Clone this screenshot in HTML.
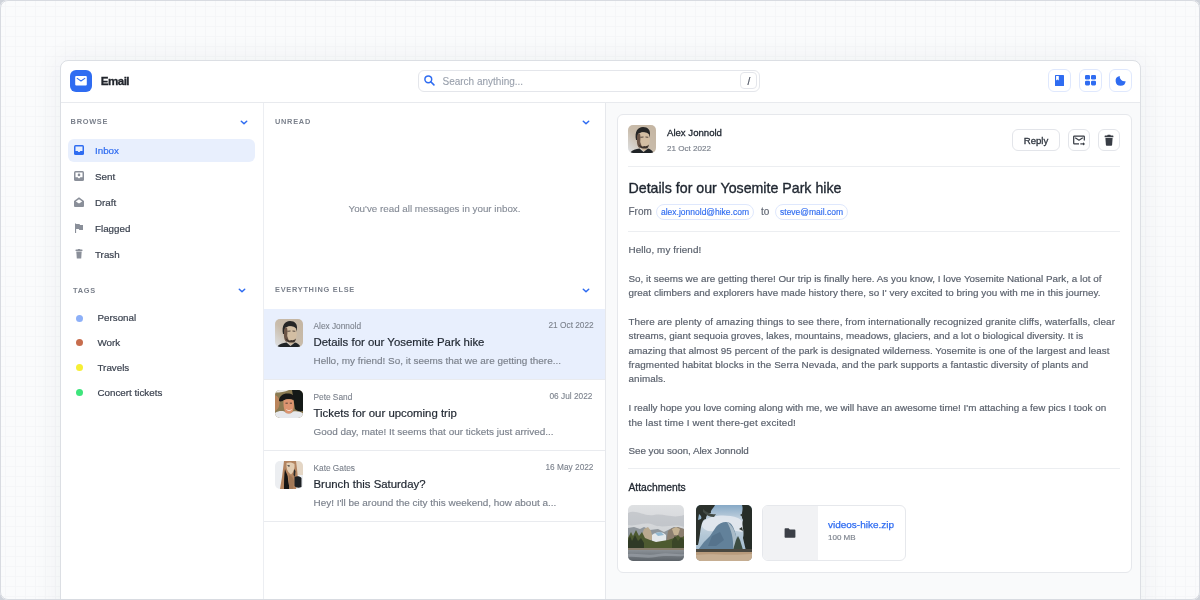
<!DOCTYPE html>
<html><head><meta charset="utf-8"><title>Email</title>
<style>
*{box-sizing:border-box;margin:0;padding:0}
html,body{width:1200px;height:600px;overflow:hidden;background:#cfd3da}
body{font-family:"Liberation Sans",sans-serif;position:relative}
.a{position:absolute}
.t{position:absolute;white-space:nowrap;line-height:1}
#bg{position:absolute;left:0;top:0;width:1200px;height:600px;border-radius:8px;
 background-color:#fafbfc;
 background-image:linear-gradient(#f5f6f8 1px,transparent 1px),linear-gradient(90deg,#f5f6f8 1px,transparent 1px);
 background-size:10px 10px;background-position:5px 6px}
#fb{position:absolute;left:0;top:0;width:1200px;height:600px;border:1px solid #d8dbe1;border-radius:8px}
#app{position:absolute;left:60px;top:60px;width:1081px;height:560px;background:#fff;border:1px solid #dcdfe4;border-radius:8px;box-shadow:0 0 28px 4px rgba(30,40,60,0.045)}
.hl{position:absolute;height:1px;background:#eceef2}
.vl{position:absolute;width:1px;background:#eceef2}
.sec{font-size:7.4px;font-weight:bold;color:#7b818c;letter-spacing:0.72px}
.chev{position:absolute;width:8px;height:5px}
.nav{font-size:9.8px;color:#3c4350;-webkit-text-stroke:0.2px currentColor}
.dot{position:absolute;width:7px;height:7px;border-radius:50%}
.item{position:absolute;left:264px;width:341px;height:71px;border-bottom:1px solid #e9ebef}
.av{position:absolute;width:28px;height:28px;border-radius:5px;overflow:hidden}
.ibtn{position:absolute;width:23px;height:23px;border:1px solid #dfe8fd;border-radius:6px;background:#fff}
.med{-webkit-text-stroke:0.3px currentColor}
.reg{-webkit-text-stroke:0.15px currentColor}
.btn{position:absolute;height:22px;border:1px solid #e3e5ea;border-radius:6px;background:#fff}
</style></head>
<body>
<div id="root" style="position:absolute;left:0;top:0;width:1200px;height:600px;will-change:transform">
<div id="bg"></div>
<div id="app"></div>
<!-- HEADER -->
<div class="a" style="left:70px;top:70px;width:22px;height:22px;border-radius:6px;background:#2f6cf1"></div>
<svg class="a" style="left:75px;top:76px" width="12" height="10" viewBox="0 0 12 10"><rect x="0.2" y="0" width="11.6" height="9.4" rx="1" fill="#fff"/><path d="M2.2 2.4 L6 5 L9.8 2.4" stroke="#2f6cf1" stroke-width="1.1" fill="none" stroke-linecap="round" stroke-linejoin="round"/></svg>
<div class="t" style="left:100.8px;top:74.9px;font-size:11.6px;font-weight:bold;color:#22262d;letter-spacing:-0.55px;-webkit-text-stroke:0.3px #22262d">Email</div>
<div class="hl" style="left:61px;top:102px;width:1079px;background:#e8eaee"></div>

<div class="a" style="left:418px;top:70px;width:342px;height:22px;border:1px solid #e4e6eb;border-radius:6px;background:#fff"></div>
<svg class="a" style="left:424px;top:75px" width="11" height="11" viewBox="0 0 11 11"><circle cx="4.3" cy="4.3" r="3.4" stroke="#2f6cf1" stroke-width="1.5" fill="none"/><path d="M6.8 6.8 L9.9 9.9" stroke="#2f6cf1" stroke-width="1.6" stroke-linecap="round"/></svg>
<div class="t" style="left:442.5px;top:77px;font-size:10px;color:#9aa1ad;-webkit-text-stroke:0.1px #9aa1ad">Search anything...</div>
<div class="a" style="left:740px;top:72px;width:17px;height:17px;border:1px solid #e4e6eb;border-radius:4px;background:#fff"></div>
<div class="t" style="left:747.6px;top:76.6px;font-size:10px;color:#4b5260;-webkit-text-stroke:0.2px #4b5260">/</div>

<div class="ibtn" style="left:1048px;top:69px"></div>
<svg class="a" style="left:1050px;top:70px" width="22" height="22" viewBox="0 0 22 22"><path d="M5.6 5 H13.4 A0.6 0.6 0 0 1 14 5.6 V15.4 A0.6 0.6 0 0 1 13.4 16 H5.6 A0.6 0.6 0 0 1 5 15.4 V5.6 A0.6 0.6 0 0 1 5.6 5 Z" fill="#2f6cf1"/><path d="M6.1 6 H8.8 V10.6 L7.45 9.6 L6.1 10.6 Z" fill="#fff"/></svg>
<div class="ibtn" style="left:1079px;top:69px"></div>
<svg class="a" style="left:1085px;top:75px" width="12" height="11" viewBox="0 0 12 11"><rect x="0" y="0" width="5" height="4.6" rx="1.3" fill="#2f6cf1"/><rect x="6" y="0" width="5" height="4.6" rx="1.3" fill="#2f6cf1"/><rect x="0" y="5.8" width="5" height="4.6" rx="1.3" fill="#2f6cf1"/><rect x="6" y="5.8" width="5" height="4.6" rx="1.3" fill="#2f6cf1"/></svg>
<div class="ibtn" style="left:1109px;top:69px"></div>
<svg class="a" style="left:1110px;top:70px" width="22" height="22" viewBox="0 0 22 22"><path d="M9.7 5.9 A5 5 0 1 0 15.6 11.2 A4.8 4.8 0 0 1 9.7 5.9 Z" fill="#2f6cf1"/></svg>

<!-- COLUMN BORDERS -->
<div class="vl" style="left:263px;top:103px;height:497px"></div>
<div class="vl" style="left:605px;top:103px;height:497px;background:#e6e8ec"></div>
<div class="a" style="left:606px;top:103px;width:534px;height:497px;background:#f9fafb"></div>

<!-- SIDEBAR -->
<div class="t sec" style="left:70.6px;top:118.3px">BROWSE</div>
<svg class="chev" style="left:240px;top:119.5px" viewBox="0 0 8 5"><path d="M1.3 1.2 L4 3.8 L6.7 1.2" stroke="#2f6cf1" stroke-width="1.5" fill="none" stroke-linecap="round" stroke-linejoin="round"/></svg>
<div class="a" style="left:68px;top:139px;width:187px;height:23px;border-radius:6px;background:#e8effd"></div>
<svg class="a" style="left:74px;top:145px" width="10" height="10" viewBox="0 0 10 10"><rect x="0" y="0" width="10" height="10" rx="1.5" fill="#2f6cf1"/><path d="M1.5 1.5 H8.5 V6 H6.3 L5.6 7 H4.4 L3.7 6 H1.5 Z" fill="#e8effd"/></svg>
<div class="t nav" style="left:95px;top:145.5px;color:#2f6cf1">Inbox</div>
<svg class="a" style="left:74px;top:171px" width="10" height="10" viewBox="0 0 10 10"><rect x="0" y="0" width="10" height="10" rx="1.5" fill="#8a8f99"/><path d="M1.5 1.5 H8.5 V6.3 H6.3 L5.6 7.2 H4.4 L3.7 6.3 H1.5 Z" fill="#fff"/><circle cx="5" cy="3.9" r="1.3" fill="#8a8f99"/></svg>
<div class="t nav" style="left:95px;top:171.5px">Sent</div>
<svg class="a" style="left:74px;top:197px" width="10" height="10" viewBox="0 0 10 10"><path d="M0 4 L5 0.3 L10 4 V9 A1 1 0 0 1 9 10 H1 A1 1 0 0 1 0 9 Z" fill="#8a8f99"/><path d="M1.8 4.6 L5 2.3 L8.2 4.6 L5 6.6 Z" fill="#fff"/></svg>
<div class="t nav" style="left:95px;top:197.5px">Draft</div>
<svg class="a" style="left:74px;top:223px" width="10" height="10" viewBox="0 0 10 10"><rect x="1" y="0.5" width="1.1" height="9.5" fill="#8a8f99"/><path d="M2 1 H5.5 L6 2 H9 V7 H5.3 L4.8 6 H2 Z" fill="#8a8f99"/></svg>
<div class="t nav" style="left:95px;top:223.5px">Flagged</div>
<svg class="a" style="left:74px;top:249px" width="10" height="10" viewBox="0 0 10 10"><rect x="1.5" y="0.6" width="7" height="1.4" rx="0.5" fill="#8a8f99"/><rect x="3.8" y="0" width="2.4" height="1" fill="#8a8f99"/><path d="M2.3 2.6 H7.7 L7.2 9.6 H2.8 Z" fill="#8a8f99"/></svg>
<div class="t nav" style="left:95px;top:249.5px">Trash</div>

<div class="t sec" style="left:73px;top:286.6px">TAGS</div>
<svg class="chev" style="left:237.5px;top:288px" viewBox="0 0 8 5"><path d="M1.3 1.2 L4 3.8 L6.7 1.2" stroke="#2f6cf1" stroke-width="1.5" fill="none" stroke-linecap="round" stroke-linejoin="round"/></svg>
<div class="dot" style="left:75.5px;top:314.5px;background:#8db0f8"></div>
<div class="t nav" style="left:97.5px;top:313px">Personal</div>
<div class="dot" style="left:75.5px;top:339px;background:#c76d4d"></div>
<div class="t nav" style="left:97.5px;top:338px">Work</div>
<div class="dot" style="left:75.5px;top:364px;background:#f6ef35"></div>
<div class="t nav" style="left:97.5px;top:363px">Travels</div>
<div class="dot" style="left:75.5px;top:389px;background:#3ee57c"></div>
<div class="t nav" style="left:97.5px;top:388px">Concert tickets</div>

<!-- MIDDLE -->
<div class="t sec" style="left:275px;top:118.3px">UNREAD</div>
<svg class="chev" style="left:581.5px;top:119.5px" viewBox="0 0 8 5"><path d="M1.3 1.2 L4 3.8 L6.7 1.2" stroke="#2f6cf1" stroke-width="1.5" fill="none" stroke-linecap="round" stroke-linejoin="round"/></svg>
<div class="t" style="left:264px;width:341px;text-align:center;top:204px;font-size:9.8px;color:#858b96;-webkit-text-stroke:0.12px #858b96">You've read all messages in your inbox.</div>
<div class="t sec" style="left:275px;top:285.8px">EVERYTHING ELSE</div>
<svg class="chev" style="left:581.5px;top:287.5px" viewBox="0 0 8 5"><path d="M1.3 1.2 L4 3.8 L6.7 1.2" stroke="#2f6cf1" stroke-width="1.5" fill="none" stroke-linecap="round" stroke-linejoin="round"/></svg>

<div class="item" style="top:309px;background:#e8effd;border-top:0"></div>
<div class="item" style="top:380px"></div>
<div class="item" style="top:451px"></div>

<div class="av" style="left:275px;top:319px" id="av1"><svg width="28" height="28" viewBox="0 0 28 28"><defs><linearGradient id="abg1" x1="1" y1="0" x2="0" y2="1"><stop offset="0" stop-color="#c4b5a2"/><stop offset="0.55" stop-color="#c9bcab"/><stop offset="1" stop-color="#dfe2e6"/></linearGradient></defs><rect width="28" height="28" fill="url(#abg1)"/>
<path d="M8 15 C6.5 7 9.5 2 15 2 C20 2 22.5 5 22 10 L21.2 13 C20.5 9 18.5 7.5 15 7.5 C12 7.5 10.5 9 10 15 Z" fill="#262626"/>
<path d="M10 9 C13 6.5 19 6.5 21 9.5 C22.2 13 22 18.5 20.3 21.5 C18.5 24 14.5 24.5 12.5 22.5 C10.5 20.5 9.5 14 10 9 Z" fill="#d3bea3"/>
<path d="M9 12 C9 9.5 10 8.5 12 8.5 L12.5 12 L12.2 17 L14 22 C12 23.5 10.5 23 9.6 20.5 C8.8 18 8.8 15 9 12 Z" fill="#6a5446"/>
<path d="M12.5 12.3 L15.5 12 M17.5 12 L20.3 12.3" stroke="#4a3d35" stroke-width="0.9"/>
<path d="M10 18.5 C11.5 22.5 14.5 24.3 16.5 24.3 C19 24.3 20.5 22.5 21 19.5 C19.5 21 18 21.5 16.5 21 C15 21.8 13.5 21.5 12.5 20.5 C11.5 20 10.8 19.5 10 18.5 Z" fill="#3d332d"/>
<path d="M13 23.5 L16 26 L19.5 23.5 Z" fill="#cbb59a"/>
<path d="M2 28 C4 25 8 23.8 11.5 23.5 L15.5 27 L20 23.5 C22 24 24.5 25.5 25.5 28 Z" fill="#1f2326"/>
</svg></div>
<div class="t" style="left:313.5px;top:322px;font-size:8.3px;color:#7b818c;-webkit-text-stroke:0.1px #7b818c">Alex Jonnold</div>
<div class="t" style="left:548.5px;top:321.2px;font-size:8.3px;color:#7b818c;-webkit-text-stroke:0.1px #7b818c">21 Oct 2022</div>
<div class="t" style="left:313.5px;top:337.2px;font-size:11.4px;color:#1f2630;-webkit-text-stroke:0.2px #1f2630">Details for our Yosemite Park hike</div>
<div class="t" style="left:313.5px;top:356px;font-size:9.95px;color:#7b818c;-webkit-text-stroke:0.15px #7b818c">Hello, my friend! So, it seems that we are getting there...</div>

<div class="av" style="left:275px;top:390px" id="av2"><svg width="28" height="28" viewBox="0 0 28 28"><rect width="28" height="28" fill="#8a7a52"/><path d="M0 0 H14 C10 2 5 2.5 0 2.5 Z" fill="#ecebe8"/><path d="M0 5 C3 6 5 9 4.5 14 C4 18 2 20 0 21 Z" fill="#c98a60" opacity="0.75"/><path d="M17 0 H28 V21 C25 22 22 21 20 19 Z" fill="#141917"/>
<path d="M4 11 C4 6 8 3.5 12.5 3.5 C17 3.5 19.5 5.5 19.5 9 L18.5 10 C16 8.5 12 8.5 9.5 10 C7.5 11 6 12 4 11 Z" fill="#171717"/>
<path d="M8.5 10.5 C11 8.8 16 8.8 18.5 10.5 C19.3 14 19 19 17.3 22 C15.5 24.5 11.5 24.5 10.2 22 C8.8 19 8.2 14.5 8.5 10.5 Z" fill="#dc9470"/>
<path d="M10.5 13.2 H12.8 M14.8 13.2 H17" stroke="#4a3a30" stroke-width="0.9"/>
<path d="M11.5 19.5 C13 21 15 21 16.5 19.5" stroke="#f4e6dc" stroke-width="0.9" fill="none"/>
<path d="M0 23 C3 21 6.5 20.5 9.5 21.5 C12 24.5 15.5 24.5 18 21.5 C22 20.8 25.5 21.5 28 23.5 V28 H0 Z" fill="#e6e8ec"/>
</svg></div>
<div class="t" style="left:313.5px;top:393px;font-size:8.3px;color:#7b818c;-webkit-text-stroke:0.1px #7b818c">Pete Sand</div>
<div class="t" style="left:549.5px;top:392.2px;font-size:8.3px;color:#7b818c;-webkit-text-stroke:0.1px #7b818c">06 Jul 2022</div>
<div class="t" style="left:313.5px;top:408.2px;font-size:11.4px;color:#1f2630;-webkit-text-stroke:0.2px #1f2630">Tickets for our upcoming trip</div>
<div class="t" style="left:313.5px;top:427px;font-size:9.95px;color:#7b818c;-webkit-text-stroke:0.15px #7b818c">Good day, mate! It seems that our tickets just arrived...</div>

<div class="av" style="left:275px;top:461px" id="av3"><svg width="28" height="28" viewBox="0 0 28 28"><rect width="28" height="28" fill="#eceef1"/><rect x="17" y="0" width="11" height="14" fill="#e4d6c5"/>
<path d="M9 0 H21 L22 8 L23 18 L21 28 H5 L7 16 Z" fill="#b38460"/>
<path d="M11.5 2 C14 1 18 1.5 19.5 3 C20 7 19 11 16 13.5 C14 12 12 10 11.5 6 Z" fill="#e2ccb2"/>
<path d="M12 4 L15 4.5 L14 6 Z" fill="#3b3b3b"/>
<path d="M10 8 C11 12 13 14 13 18 C13 22 15 26 14 28 H9 C9 22 9 14 10 8 Z" fill="#151515"/>
<path d="M19 8 L20.5 10 L20 16 L18.5 14 Z" fill="#2a2a2a"/>
<path d="M19.5 16 C22 14.5 25 15 26.5 17 V26 C24 27 21 27 19.5 25 Z" fill="#1d2024"/>
<path d="M14 14 C16 15 18 16 19 20 L18 28 H14 Z" fill="#9c7454" opacity="0.8"/>
</svg></div>
<div class="t" style="left:313.5px;top:464px;font-size:8.3px;color:#7b818c;-webkit-text-stroke:0.1px #7b818c">Kate Gates</div>
<div class="t" style="left:545.5px;top:463.2px;font-size:8.3px;color:#7b818c;-webkit-text-stroke:0.1px #7b818c">16 May 2022</div>
<div class="t" style="left:313.5px;top:479.2px;font-size:11.4px;color:#1f2630;-webkit-text-stroke:0.2px #1f2630">Brunch this Saturday?</div>
<div class="t" style="left:313.5px;top:498px;font-size:9.95px;color:#7b818c;-webkit-text-stroke:0.15px #7b818c">Hey! I'll be around the city this weekend, how about a...</div>

<!-- RIGHT CARD -->
<div class="a" style="left:617px;top:114px;width:515px;height:459px;border:1px solid #e6e8ec;border-radius:6px;background:#fff"></div>
<div class="av" style="left:628px;top:125px" id="av4"><svg width="28" height="28" viewBox="0 0 28 28"><defs><linearGradient id="abg4" x1="1" y1="0" x2="0" y2="1"><stop offset="0" stop-color="#c4b5a2"/><stop offset="0.55" stop-color="#c9bcab"/><stop offset="1" stop-color="#dfe2e6"/></linearGradient></defs><rect width="28" height="28" fill="url(#abg4)"/>
<path d="M8 15 C6.5 7 9.5 2 15 2 C20 2 22.5 5 22 10 L21.2 13 C20.5 9 18.5 7.5 15 7.5 C12 7.5 10.5 9 10 15 Z" fill="#262626"/>
<path d="M10 9 C13 6.5 19 6.5 21 9.5 C22.2 13 22 18.5 20.3 21.5 C18.5 24 14.5 24.5 12.5 22.5 C10.5 20.5 9.5 14 10 9 Z" fill="#d3bea3"/>
<path d="M9 12 C9 9.5 10 8.5 12 8.5 L12.5 12 L12.2 17 L14 22 C12 23.5 10.5 23 9.6 20.5 C8.8 18 8.8 15 9 12 Z" fill="#6a5446"/>
<path d="M12.5 12.3 L15.5 12 M17.5 12 L20.3 12.3" stroke="#4a3d35" stroke-width="0.9"/>
<path d="M10 18.5 C11.5 22.5 14.5 24.3 16.5 24.3 C19 24.3 20.5 22.5 21 19.5 C19.5 21 18 21.5 16.5 21 C15 21.8 13.5 21.5 12.5 20.5 C11.5 20 10.8 19.5 10 18.5 Z" fill="#3d332d"/>
<path d="M13 23.5 L16 26 L19.5 23.5 Z" fill="#cbb59a"/>
<path d="M2 28 C4 25 8 23.8 11.5 23.5 L15.5 27 L20 23.5 C22 24 24.5 25.5 25.5 28 Z" fill="#1f2326"/>
</svg></div>
<div class="t" style="left:667px;top:128.3px;font-size:9.6px;color:#1f2630;-webkit-text-stroke:0.3px #1f2630">Alex Jonnold</div>
<div class="t" style="left:667px;top:145px;font-size:8.1px;color:#7b818c;-webkit-text-stroke:0.15px #7b818c">21 Oct 2022</div>

<div class="btn" style="left:1012px;top:129px;width:48px"></div>
<div class="t" style="left:1012px;width:48px;text-align:center;top:135.8px;font-size:9.6px;color:#2c333d;-webkit-text-stroke:0.3px #2c333d">Reply</div>
<div class="btn" style="left:1068px;top:129px;width:22px"></div>
<svg class="a" style="left:1068px;top:129px" width="22" height="22" viewBox="0 0 22 22"><path d="M16.3 11.6 V7.8 A0.6 0.6 0 0 0 15.7 7.2 H6.3 A0.6 0.6 0 0 0 5.7 7.8 V14.2 A0.6 0.6 0 0 0 6.3 14.8 H11" stroke="#383d45" stroke-width="1.25" fill="none"/><path d="M7.2 8.8 L11 11.2 L14.8 8.8" stroke="#383d45" stroke-width="1.15" fill="none" stroke-linejoin="round"/><path d="M12.3 14.9 H15.6" stroke="#383d45" stroke-width="1.2"/><path d="M15 13.3 L17.1 14.9 L15 16.5 Z" fill="#383d45"/></svg>
<div class="btn" style="left:1098px;top:129px;width:22px"></div>
<svg class="a" style="left:1098px;top:129px" width="22" height="22" viewBox="0 0 22 22"><rect x="6.6" y="6.6" width="8.8" height="1.7" rx="0.5" fill="#383d45"/><rect x="9.3" y="5.8" width="3.4" height="1.2" rx="0.5" fill="#383d45"/><path d="M7.4 8.9 H14.6 L14.1 16.1 A0.8 0.8 0 0 1 13.3 16.8 H8.7 A0.8 0.8 0 0 1 7.9 16.1 Z" fill="#383d45"/></svg>

<div class="hl" style="left:628px;top:166px;width:492px;background:#eceef1"></div>
<div class="t" style="left:628.5px;top:180.9px;font-size:14.2px;color:#1f2630;-webkit-text-stroke:0.35px #1f2630">Details for our Yosemite Park hike</div>
<div class="t" style="left:628.5px;top:207.2px;font-size:10px;color:#5f6571;-webkit-text-stroke:0.15px #5f6571">From</div>
<div class="a" style="left:656px;top:204px;width:98px;height:16px;border:1px solid #dfe8fd;border-radius:8px"></div>
<div class="t" style="left:656px;width:98px;text-align:center;top:208.4px;font-size:8.5px;color:#2f6cf1;-webkit-text-stroke:0.15px #2f6cf1">alex.jonnold@hike.com</div>
<div class="t" style="left:761px;top:207.2px;font-size:10px;color:#5f6571;-webkit-text-stroke:0.15px #5f6571">to</div>
<div class="a" style="left:775px;top:204px;width:73px;height:16px;border:1px solid #dfe8fd;border-radius:8px"></div>
<div class="t" style="left:775px;width:73px;text-align:center;top:208.4px;font-size:8.5px;color:#2f6cf1;-webkit-text-stroke:0.15px #2f6cf1">steve@mail.com</div>
<div class="hl" style="left:628px;top:231px;width:492px;background:#eceef1"></div>

<div class="a" id="body" style="left:628.5px;top:242.9px;font-size:9.86px;line-height:14.4px;color:#535a66;white-space:nowrap;-webkit-text-stroke:0.2px #6a707b">
<div class="a" style="left:0;top:0.0px;letter-spacing:0.1px">Hello, my friend!</div>
<div class="a" style="left:0;top:28.8px;letter-spacing:0.016px">So, it seems we are getting there! Our trip is finally here. As you know, I love Yosemite National Park, a lot of</div>
<div class="a" style="left:0;top:43.2px;letter-spacing:0.043px">great climbers and explorers have made history there, so I' very excited to bring you with me in this journey.</div>
<div class="a" style="left:0;top:72.0px;letter-spacing:0.1035px">There are plenty of amazing things to see there, from internationally recognized granite cliffs, waterfalls, clear</div>
<div class="a" style="left:0;top:86.4px;letter-spacing:0.028px">streams, giant sequoia groves, lakes, mountains, meadows, glaciers, and a lot o biological diversity. It is</div>
<div class="a" style="left:0;top:100.8px;letter-spacing:0.072px">amazing that almost 95 percent of the park is designated wilderness. Yosemite is one of the largest and least</div>
<div class="a" style="left:0;top:115.2px;letter-spacing:0.102px">fragmented habitat blocks in the Serra Nevada, and the park supports a fantastic diversity of plants and</div>
<div class="a" style="left:0;top:129.6px;letter-spacing:0.1px">animals.</div>
<div class="a" style="left:0;top:158.4px;letter-spacing:0.003px">I really hope you love coming along with me, we will have an awesome time! I'm attaching a few pics I took on</div>
<div class="a" style="left:0;top:172.8px;letter-spacing:0.17px">the last time I went there-get excited!</div>
<div class="a" style="left:0;top:201.6px;letter-spacing:-0.05px">See you soon, Alex Jonnold</div>
</div>
<div class="hl" style="left:628px;top:468px;width:492px;background:#eceef1"></div>
<div class="t" style="left:628.5px;top:483.2px;font-size:10.3px;color:#1f2630;-webkit-text-stroke:0.3px #1f2630">Attachments</div>

<div class="a" style="left:628px;top:505px;width:56px;height:56px;border-radius:5px;overflow:hidden" id="img1"><svg width="56" height="56" viewBox="0 0 56 56"><defs><linearGradient id="sky1" x1="0" y1="0" x2="0" y2="1"><stop offset="0" stop-color="#dfe1e3"/><stop offset="0.5" stop-color="#d0d3d6"/><stop offset="1" stop-color="#bfc4c8"/></linearGradient><linearGradient id="riv1" x1="0" y1="0" x2="0" y2="1"><stop offset="0" stop-color="#8a9096"/><stop offset="1" stop-color="#5d6369"/></linearGradient></defs>
<rect width="56" height="56" fill="url(#sky1)"/>
<path d="M0 8 C8 4 16 12 26 10 C36 8 44 14 56 10 V22 C46 18 36 24 26 20 C16 16 8 22 0 20 Z" fill="#aeb2b7" opacity="0.45"/>
<path d="M0 23 L6 22 L12 24 L16 22 L22 25 L30 24 L36 27 L40 25 L46 22 L52 23 L56 24 V40 H0 Z" fill="#8f969c"/>
<path d="M16 24 L20 22 L23 26 L25 34 L18 38 L14 30 Z" fill="#b9a98f"/>
<path d="M40 26 L44 23 L50 22 L56 24 V38 L38 38 Z" fill="#8c7f70"/>
<path d="M44 24 L48 22 L52 24 L50 30 L46 30 Z" fill="#c4b293"/>
<path d="M24 30 C28 27 34 26 38 30 L38 37 L24 37 Z" fill="#e4e8eb"/>
<path d="M27 28 L33 27 L36 30 L30 31 Z" fill="#93b8d0"/>
<path d="M0 33 L3 27 L5 31 L8 25 L11 31 L14 27 L17 33 L22 35 L28 37 L34 36 L40 35 L46 33 L50 30 L53 33 L56 31 V45 H0 Z" fill="#4d5a30"/>
<path d="M0 36 L2 31 L4 36 L7 30 L10 36 L13 33 L16 38 V45 H0 Z" fill="#2f3a26"/>
<path d="M44 36 L47 31 L50 36 L53 32 L56 35 V44 H44 Z" fill="#3a4628"/>
<rect x="0" y="43" width="56" height="3" fill="#8a7f6e"/>
<rect x="0" y="45" width="56" height="11" fill="url(#riv1)"/>
<path d="M0 49 C10 48 20 51 30 49 C40 47 48 50 56 49 V51 C46 52 38 50 28 52 C18 54 8 51 0 52 Z" fill="#9aa0a6" opacity="0.7"/>
</svg></div>
<div class="a" style="left:695.5px;top:505px;width:56px;height:56px;border-radius:5px;overflow:hidden" id="img2"><svg width="56" height="56" viewBox="0 0 56 56"><defs><linearGradient id="sky2" x1="0" y1="0" x2="0" y2="1"><stop offset="0" stop-color="#86a9c6"/><stop offset="0.3" stop-color="#cdd9e3"/><stop offset="0.55" stop-color="#b3c7d6"/><stop offset="1" stop-color="#98b5ca"/></linearGradient></defs>
<rect width="56" height="56" fill="url(#sky2)"/>
<path d="M8 16 C16 10 30 9 42 13 C48 16 50 22 46 27 C36 24 24 27 12 26 C6 24 4 19 8 16 Z" fill="#e2e8ee" opacity="0.9"/>
<path d="M2 45 L8 37 L14 31 L20 22 C24 17 30 16 34 18 C39 22 41 33 42 45 Z" fill="#62819a"/>
<path d="M31 17 C37 20 40 28 41 37 L42 45 L37 45 C38 34 35 24 31 17 Z" fill="#a9bbc8"/>
<path d="M16 31 L24 27 L28 35 L20 41 L12 41 Z" fill="#56738c"/>
<path d="M37 45 L40 35 L42 31 L44 35 L47 45 Z" fill="#3c4c41"/>
<path d="M0 0 H19 C18 3 14 5 15 8 C12 8 10 11 10 14 C7 14 6 18 5 22 C4 27 4 32 2 40 H0 Z" fill="#2b312c"/>
<path d="M7 4 C11 8 16 10 20 9 L18 12 C14 12 10 10 7 7 Z" fill="#434b45"/>
<path d="M3 9 C5 11 6 12 5 14 L2 15 Z" fill="#8fb0c8"/>
<path d="M56 0 H46 C48 5 44 10 47 15 C45 20 49 26 47 33 L50 46 H56 Z" fill="#262d28"/>
<path d="M47 8 L44 10 L47 12 Z M46 22 L43 24 L47 26 Z" fill="#2e352f"/>
<rect x="0" y="44" width="56" height="3" fill="#4a4840"/>
<rect x="0" y="47" width="56" height="9" fill="#b89b7c"/>
<path d="M0 50 C14 48 30 51 56 49 V56 H0 Z" fill="#c6ae92"/>
</svg></div>

<div class="a" style="left:762px;top:505px;width:144px;height:56px;border:1px solid #e6e8ec;border-radius:6px;background:#fff;overflow:hidden"><div class="a" style="left:0;top:0;width:55px;height:54px;background:#f1f2f4"></div></div>
<svg class="a" style="left:784px;top:528px" width="12" height="10" viewBox="0 0 12 10"><path d="M0.6 1 A0.8 0.8 0 0 1 1.4 0.2 H4.6 L5.8 1.6 H10.6 A0.8 0.8 0 0 1 11.4 2.4 V9 A0.8 0.8 0 0 1 10.6 9.8 H1.4 A0.8 0.8 0 0 1 0.6 9 Z" fill="#3b3f46"/></svg>
<div class="t" style="left:828px;top:519.8px;font-size:9.98px;color:#2f6cf1;-webkit-text-stroke:0.25px #2f6cf1">videos-hike.zip</div>
<div class="t" style="left:828px;top:533.8px;font-size:8px;color:#7b818c;-webkit-text-stroke:0.15px #7b818c">100 MB</div>
<div id="fb"></div>
</div>
</body></html>
